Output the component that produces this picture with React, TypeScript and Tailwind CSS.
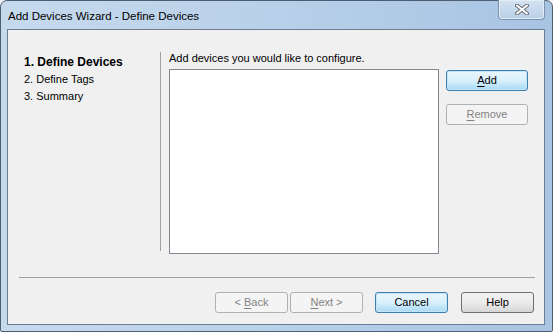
const font = { fontFamily: '"Liberation Sans", Arial, sans-serif' };

type BtnProps = {
  label: React.ReactNode;
  disabled?: boolean;
  primary?: boolean;
  className?: string;
};

const Btn = ({ label, disabled, primary, className = "" }: BtnProps) => {
  let look =
    "border-[#707070] bg-gradient-to-b from-[#f2f2f2] via-[#ebebeb] to-[#d6d6d6] text-black";
  if (primary)
    look =
      "border-[#3c7fb1] bg-gradient-to-b from-[#eaf6fd] via-[#d9f0fc] to-[#a7d9f5] text-black shadow-[inset_0_0_0_1px_#c4e5f6]";
  if (disabled) look = "border-[#adb2b5] bg-[#f4f4f4] text-[#838383]";
  return (
    <div
      className={`h-[21px] flex items-center justify-center rounded-[3px] border text-[11px] leading-none ${look} ${className}`}
    >
      {label}
    </div>
  );
};

export default function App() {
  return (
    <div className="w-[553px] h-[332px] bg-[#f0f0f0]" style={font}>
      <div className="w-full h-full flex flex-col rounded-t-[7px] rounded-b-[2px] border border-[#4e5e72] bg-gradient-to-r from-[#c6daee] via-[#b8d0e9] to-[#a8c4e3]">
        {/* Title bar */}
        <div className="h-[28px] flex items-start relative">
          <div className="pl-[7px] pt-[7px] text-[11.5px] text-black">Add Devices Wizard - Define Devices</div>
          <div className="absolute right-[7px] top-[-1px] w-[47px] h-[20px] rounded-b-[4px] border border-[#7f93ad] border-t-0 bg-gradient-to-b from-[#d5e3f2] to-[#b9cfe7] shadow-[inset_0_0_0_1px_#e3edf7] flex items-center justify-center">
            <svg width="14" height="11" viewBox="0 0 14 11">
              <path d="M2 1.5 L12 9.5 M12 1.5 L2 9.5" stroke="#6a6f76" strokeWidth="4" strokeLinecap="round" />
              <path d="M2 1.5 L12 9.5 M12 1.5 L2 9.5" stroke="#ffffff" strokeWidth="2" strokeLinecap="round" />
            </svg>
          </div>
        </div>

        {/* Client area */}
        <div className="ml-[6px] mr-[7px] mb-[6px] flex-1 border border-[#6d7d91] bg-[#f0f0f0] flex flex-col text-[11px] text-black">
          <div className="h-[247px] flex">
            {/* Steps */}
            <div className="w-[152px] pl-[16px] pt-[24px] leading-[17px]">
              <div className="font-bold text-[12px]">1. Define Devices</div>
              <div>2. Define Tags</div>
              <div>3. Summary</div>
            </div>
            <div className="mt-[22px] w-px h-[199px] bg-[#a0a0a0]" />
            <div className="pl-[8px] pt-[20px]">
              <div className="leading-[17px]">Add devices you would like to configure.</div>
              <div className="mt-[2px] flex">
                <div className="w-[270px] h-[185px] bg-white border border-[#828790]" />
                <div className="ml-[7px] mt-px flex flex-col gap-[13px]">
                  <Btn
                    primary
                    className="w-[82px]"
                    label={
                      <span>
                        <span className="underline underline-offset-2">A</span>dd
                      </span>
                    }
                  />
                  <Btn
                    disabled
                    className="w-[82px]"
                    label={
                      <span>
                        <span className="underline underline-offset-2">R</span>emove
                      </span>
                    }
                  />
                </div>
              </div>
            </div>
          </div>

          <div className="ml-[11px] w-[516px] h-px bg-[#a0a0a0]" />

          <div className="pt-[14px] pr-[10px] flex justify-end">
            <Btn
              disabled
              className="w-[73px]"
              label={
                <span>
                  &lt; <span className="underline underline-offset-2">B</span>ack
                </span>
              }
            />
            <Btn
              disabled
              className="w-[73px] ml-[2px]"
              label={
                <span>
                  <span className="underline underline-offset-2">N</span>ext &gt;
                </span>
              }
            />
            <Btn primary className="w-[73px] ml-[12px]" label="Cancel" />
            <Btn className="w-[73px] ml-[13px]" label="Help" />
          </div>
        </div>
      </div>
    </div>
  );
}
